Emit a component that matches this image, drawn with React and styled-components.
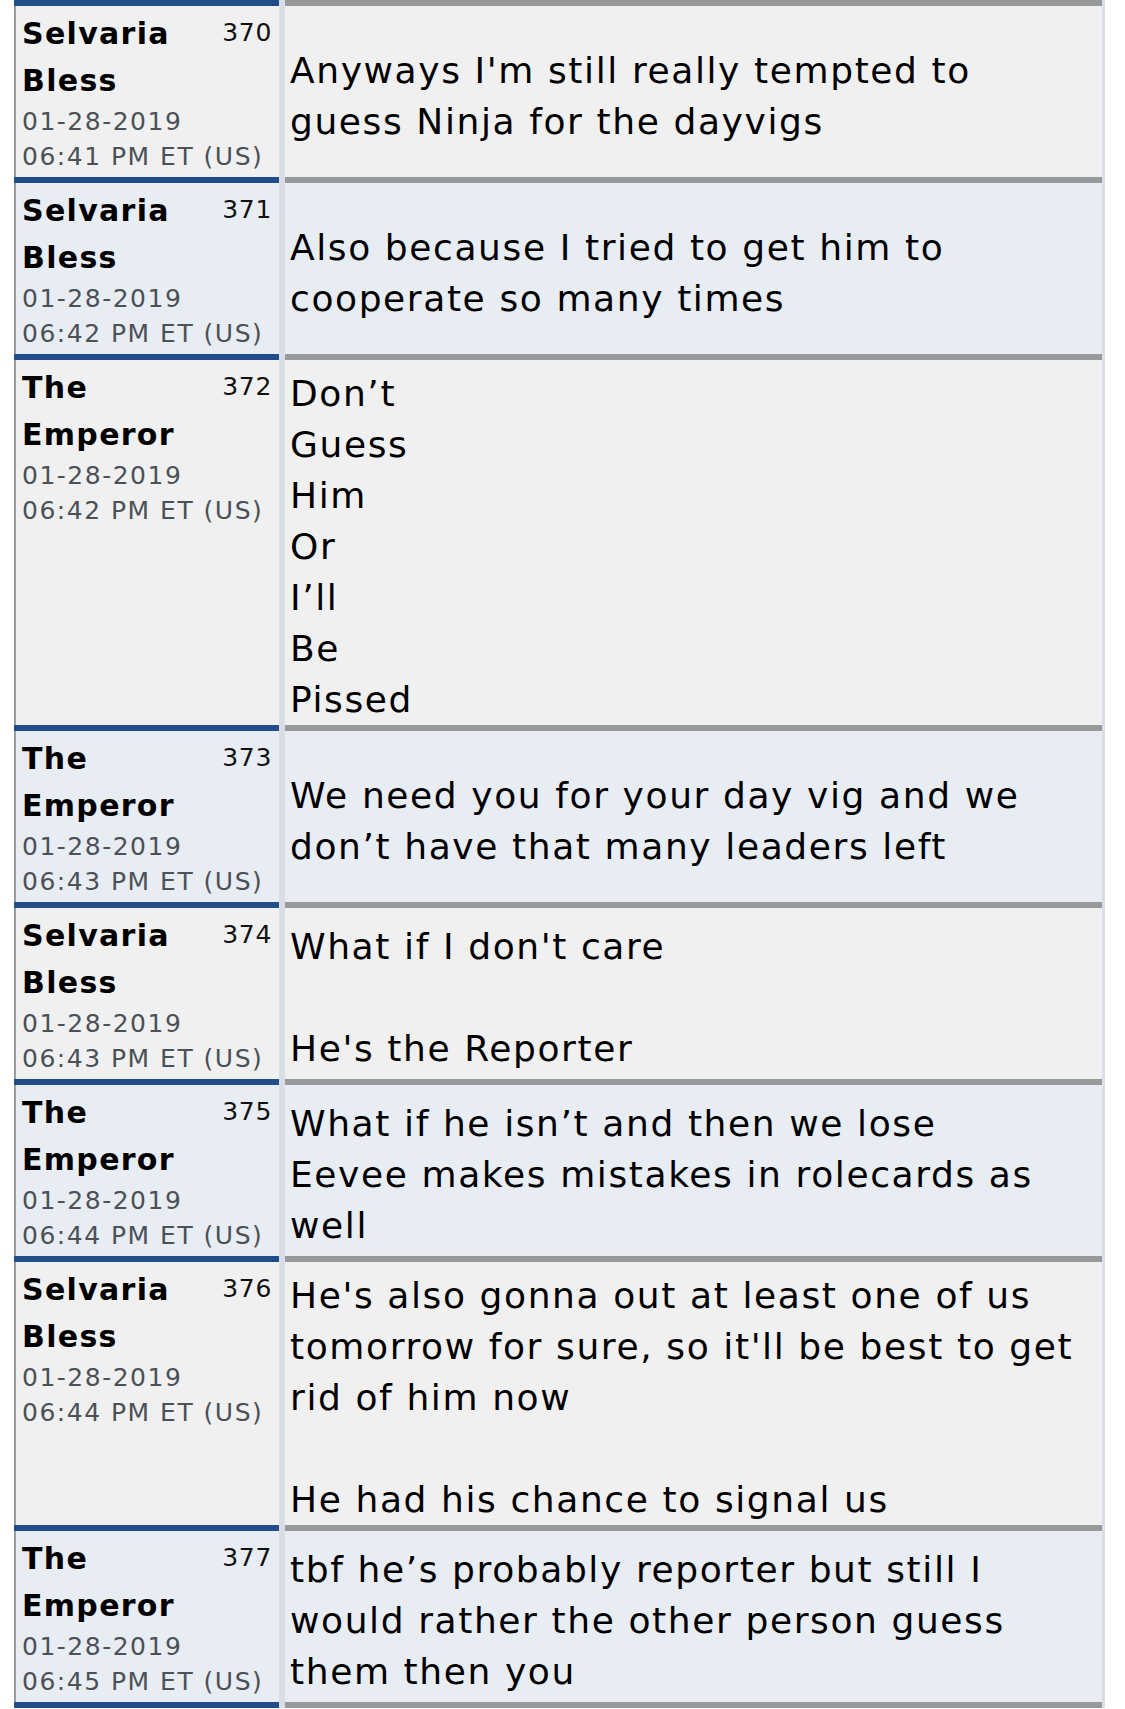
import styled, { createGlobalStyle } from "styled-components";

const GlobalStyle = createGlobalStyle`
  body {
    margin: 0;
    background: #ffffff;
    font-family: "DejaVu Sans", Verdana, sans-serif;
  }
`;

const posts = [
  {
    id: 370,
    author: "Selvaria Bless",
    time: "06:41 PM",
    lines: ["Anyways I'm still really tempted to", "guess Ninja for the dayvigs"],
  },
  {
    id: 371,
    author: "Selvaria Bless",
    time: "06:42 PM",
    lines: ["Also because I tried to get him to", "cooperate so many times"],
  },
  {
    id: 372,
    author: "The Emperor",
    time: "06:42 PM",
    lines: ["Don’t", "Guess", "Him", "Or", "I’ll", "Be", "Pissed"],
  },
  {
    id: 373,
    author: "The Emperor",
    time: "06:43 PM",
    lines: ["We need you for your day vig and we", "don’t have that many leaders left"],
  },
  {
    id: 374,
    author: "Selvaria Bless",
    time: "06:43 PM",
    lines: ["What if I don't care", "", "He's the Reporter"],
  },
  {
    id: 375,
    author: "The Emperor",
    time: "06:44 PM",
    lines: [
      "What if he isn’t and then we lose",
      "Eevee makes mistakes in rolecards as",
      "well",
    ],
  },
  {
    id: 376,
    author: "Selvaria Bless",
    time: "06:44 PM",
    lines: [
      "He's also gonna out at least one of us",
      "tomorrow for sure, so it'll be best to get",
      "rid of him now",
      "",
      "He had his chance to signal us",
    ],
  },
  {
    id: 377,
    author: "The Emperor",
    time: "06:45 PM",
    lines: [
      "tbf he’s probably reporter but still I",
      "would rather the other person guess",
      "them then you",
    ],
  },
];

const Thread = styled.div`
  margin-left: 14px;
  width: 1091px;
`;

const Row = styled.div`
  display: grid;
  grid-template-columns: 265px 817px;
  column-gap: 6px;
  padding-right: 3px;
  background: #d8dde6;
`;

const Head = styled.div`
  border-top: 6px solid #214e88;
  box-shadow: inset 2px 0 0 #9a9b9d;
  background: ${(p) => (p.$alt ? "#e8ecf3" : "#f0f0f0")};
  padding: ${(p) => (p.$empty ? "0" : "5px 7px 3px 8px")};
`;

const Body = styled.div`
  border-top: 6px solid #98999b;
  background: ${(p) => (p.$alt ? "#e8ecf3" : "#f0f0f0")};
  padding: ${(p) => (p.$empty ? "0" : "8px 5px 0 5px")};
  display: flex;
  flex-direction: column;
  justify-content: center;
  font-size: 36px;
  line-height: 51px;
  letter-spacing: 1.6px;
  color: #000;
  white-space: nowrap;
`;

const TopLine = styled.div`
  display: flex;
  align-items: flex-start;
  justify-content: space-between;
`;

const Author = styled.div`
  width: 170px;
  font-weight: bold;
  font-size: 30px;
  line-height: 46.5px;
  letter-spacing: 1.3px;
  color: #000;
`;

const Num = styled.div`
  font-size: 25px;
  line-height: 44px;
  letter-spacing: 0.7px;
  color: #111;
`;

const Stamp = styled.div`
  font-size: 25px;
  line-height: 35px;
  letter-spacing: 1.5px;
  color: #4b5157;
  white-space: nowrap;
`;

const Line = styled.div`
  min-height: 51px;
`;

export default function App() {
  return (
    <>
      <GlobalStyle />
      <Thread>
        {posts.map((p, i) => (
          <Row key={p.id}>
            <Head $alt={i % 2 === 1}>
              <TopLine>
                <Author>{p.author}</Author>
                <Num>{p.id}</Num>
              </TopLine>
              <Stamp>01-28-2019</Stamp>
              <Stamp>{p.time} ET (US)</Stamp>
            </Head>
            <Body $alt={i % 2 === 1}>
              {p.lines.map((l, j) => (
                <Line key={j}>{l}</Line>
              ))}
            </Body>
          </Row>
        ))}
        <Row>
          <Head $empty />
          <Body $empty />
        </Row>
      </Thread>
    </>
  );
}
